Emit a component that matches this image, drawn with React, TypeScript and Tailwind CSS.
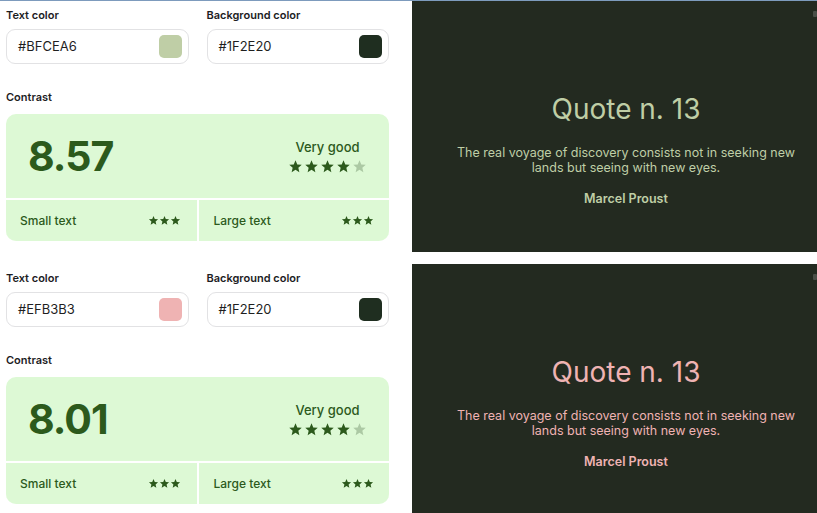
import React from 'react';

interface Pair {
  text: string;
  bg: string;
  ratio: string;
}

const pairs: Pair[] = [
  { text: '#BFCEA6', bg: '#1F2E20', ratio: '8.57' },
  { text: '#EFB3B3', bg: '#1F2E20', ratio: '8.01' },
];

function Star({ size, faded }: { size: number; faded?: boolean }) {
  return (
    <svg width={size} height={size} viewBox="0 0 24 24" className={faded ? 'text-[#acc9a4]' : 'text-[#2c5a1c]'}>
      <path
        fill="currentColor"
        d="M12 17.27L18.18 21l-1.64-7.03L22 9.24l-7.19-.61L12 2 9.19 8.63 2 9.24l5.46 4.73L5.82 21z"
      />
    </svg>
  );
}

function ColorInput({ label, value }: { label: string; value: string }) {
  return (
    <div>
      <div className="text-[11px] leading-[16px] font-semibold text-[#1d1d1f]">{label}</div>
      <div className="mt-[6px] h-[35px] flex items-center justify-between pl-[11px] pr-[6px] rounded-[9px] border border-[#e2e2e4] bg-white">
        <span className="text-[13px] text-[#1f1f1f]">{value}</span>
        <span className="w-[23px] h-[23px] rounded-[5px]" style={{ backgroundColor: value }} />
      </div>
    </div>
  );
}

function Section({ pair }: { pair: Pair }) {
  return (
    <div className="flex h-[251px] shrink-0">
      {/* controls */}
      <div className="w-[412px] shrink-0 pl-[6px] pr-[23px] pt-[6px]">
        <div className="grid grid-cols-2 gap-[18px]">
          <ColorInput label="Text color" value={pair.text} />
          <ColorInput label="Background color" value={pair.bg} />
        </div>
        <div className="mt-[25px] text-[11px] leading-[16px] font-semibold text-[#1d1d1f]">Contrast</div>
        <div className="mt-[9px] rounded-[10px] bg-[#ddf9d5] overflow-hidden text-[#2c5a1c]">
          <div className="h-[84px] flex items-center justify-between pl-[22px] pr-[22px]">
            <span className="text-[41px] leading-none font-bold tracking-[-1px]">{pair.ratio}</span>
            <div className="flex flex-col items-center gap-[4px]">
              <span className="text-[13px] leading-[16px] font-medium">Very good</span>
              <div className="flex gap-[1px]">
                <Star size={15} />
                <Star size={15} />
                <Star size={15} />
                <Star size={15} />
                <Star size={15} faded />
              </div>
            </div>
          </div>
          <div className="grid grid-cols-2 gap-[2px] pt-[2px] bg-white">
            <div className="h-[41px] flex items-center justify-between pl-[14px] pr-[16px] bg-[#ddf9d5]">
              <span className="text-[12px] font-medium">Small text</span>
              <div className="flex">
                <Star size={11} />
                <Star size={11} />
                <Star size={11} />
              </div>
            </div>
            <div className="h-[41px] flex items-center justify-between pl-[15px] pr-[15px] bg-[#ddf9d5]">
              <span className="text-[12px] font-medium">Large text</span>
              <div className="flex">
                <Star size={11} />
                <Star size={11} />
                <Star size={11} />
              </div>
            </div>
          </div>
        </div>
      </div>

      {/* preview */}
      <div className="relative w-[428px] shrink-0 bg-[#232a20] flex flex-col items-center pt-[92px]" style={{ color: pair.text }}>
        <span className="absolute top-[10px] left-[401px] w-[4px] h-[6px] rounded-[1px] bg-[#4a4f48]" />
        <h1 className="text-[28px] leading-[32px] font-normal">Quote n. 13</h1>
        <p className="mt-[20px] max-w-[345px] text-center text-[12.5px] leading-[15px]">
          The real voyage of discovery consists not in seeking new lands but seeing with new eyes.
        </p>
        <p className="mt-[16px] text-[12.5px] leading-[15px] font-semibold">Marcel Proust</p>
      </div>
    </div>
  );
}

export default function App() {
  return (
    <div className="w-[817px] h-[513px] overflow-hidden bg-white border-t border-[#7d9bbd] flex flex-col gap-[12px] font-['Inter',sans-serif]">
      {pairs.map((p, i) => (
        <Section key={i} pair={p} />
      ))}
    </div>
  );
}
